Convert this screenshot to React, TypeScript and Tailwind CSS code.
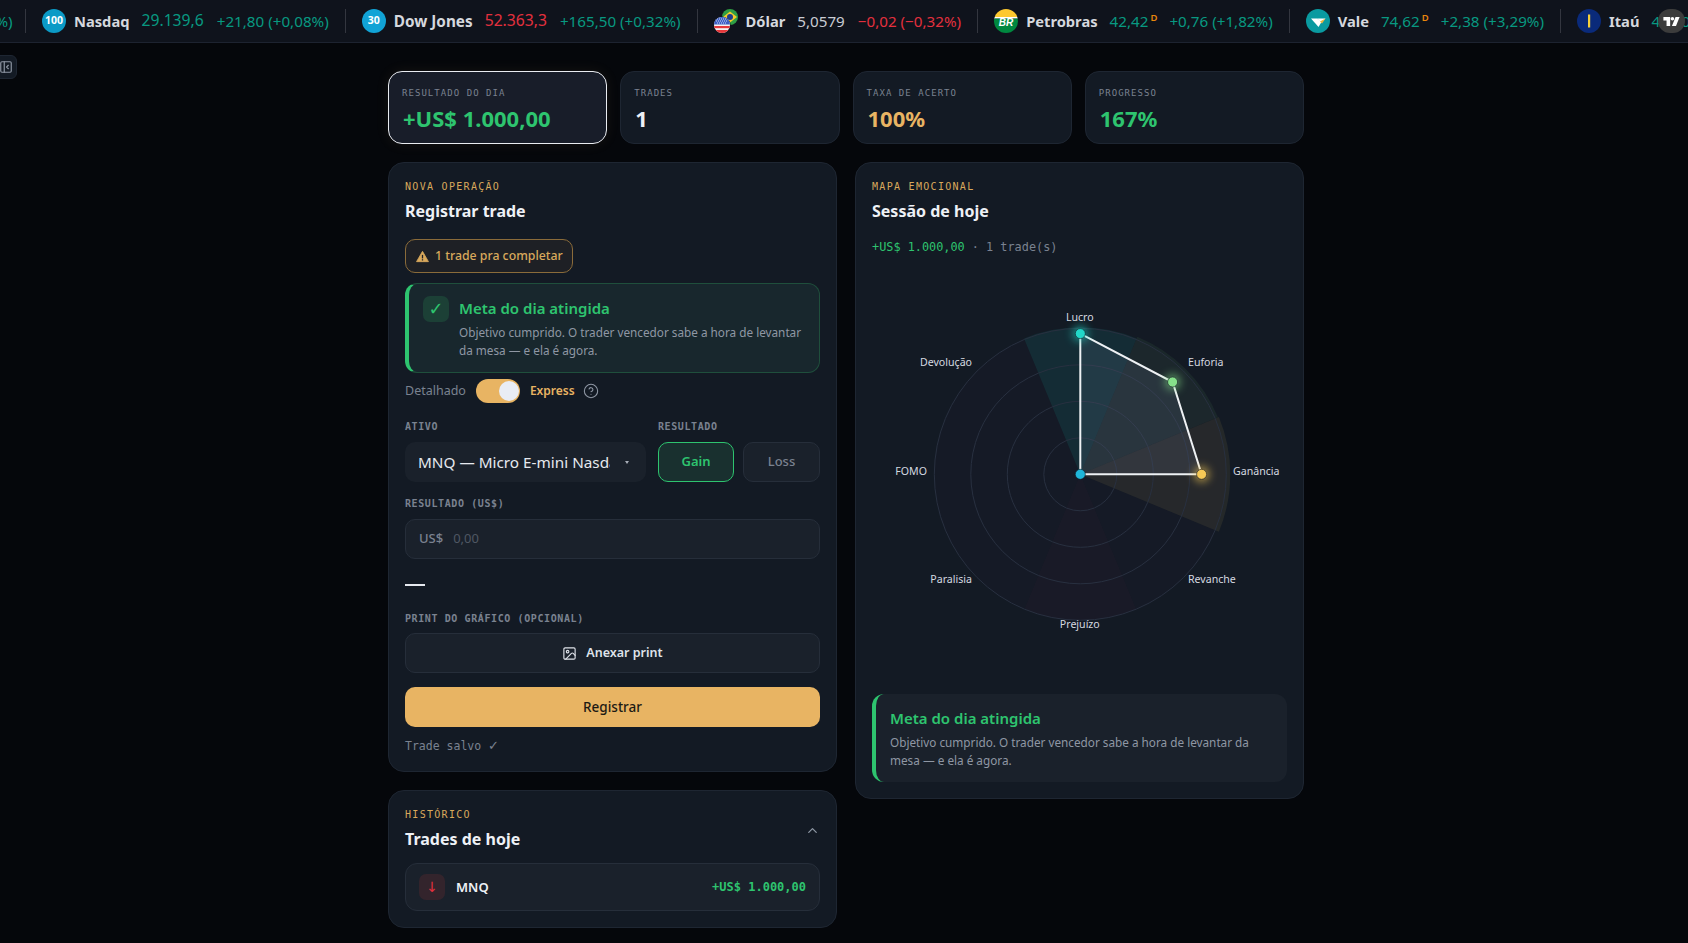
import React from "react";
import { CircleHelp, Image as ImageIcon, ChevronUp, PanelLeftClose } from "lucide-react";

const SANS = "font-['Noto_Sans','Open_Sans',sans-serif]";
const MONO = "font-['DejaVu_Sans_Mono','Liberation_Mono',monospace]";

function Badge({ children, bg }: { children: React.ReactNode; bg: string }) {
  return (
    <span className="flex h-6 w-6 shrink-0 items-center justify-center rounded-full text-[10.5px] font-bold text-white" style={{ background: bg }}>
      {children}
    </span>
  );
}

function Flags() {
  return (
    <svg width="24" height="24" viewBox="0 0 24 24" className="shrink-0">
      <circle cx="16" cy="8" r="8" fill="#2f9e44" />
      <path d="M16 2.5 23 8l-7 5.5L9 8z" fill="#f7c92b" />
      <circle cx="16" cy="8" r="3" fill="#1d3f8f" />
      <circle cx="8" cy="16" r="8.6" fill="#10131c" />
      <clipPath id="us"><circle cx="8" cy="16" r="8" /></clipPath>
      <g clipPath="url(#us)">
        <rect x="0" y="8" width="16" height="16" fill="#f4f4f4" />
        <rect x="0" y="17" width="16" height="2.2" fill="#e5383b" />
        <rect x="0" y="21" width="16" height="3" fill="#e5383b" />
        <rect x="0" y="8" width="16" height="7.5" fill="#3c5fc4" />
        <path d="M3 10h10M2 12h12M3 14h10" stroke="#dfe6ff" strokeWidth="0.9" strokeDasharray="1 1" />
      </g>
    </svg>
  );
}

function Petrobras() {
  return (
    <svg width="24" height="24" viewBox="0 0 24 24" className="shrink-0">
      <clipPath id="pb"><circle cx="12" cy="12" r="12" /></clipPath>
      <g clipPath="url(#pb)">
        <rect width="24" height="8" fill="#fdc82f" />
        <rect y="8" width="24" height="1.6" fill="#fff" />
        <rect y="9.6" width="24" height="14.4" fill="#00883f" />
      </g>
      <text x="12" y="17" textAnchor="middle" fontSize="10" fontWeight="700" fontStyle="italic" fill="#fff" fontFamily="Liberation Sans">BR</text>
    </svg>
  );
}

function Vale() {
  return (
    <svg width="24" height="24" viewBox="0 0 24 24" className="shrink-0">
      <circle cx="12" cy="12" r="12" fill="#0a9aa0" />
      <path d="M5 9.5 12.5 18 15.5 13 11 9.5z" fill="#fff" />
      <path d="M11 9.5h8.5l-4 4.5z" fill="#fff" />
      <path d="M14 12.5 19.5 9.5 16 14.5z" fill="#e9b23a" />
    </svg>
  );
}

function Itau() {
  return (
    <svg width="24" height="24" viewBox="0 0 24 24" className="shrink-0">
      <circle cx="12" cy="12" r="12" fill="#0a2a7a" />
      <rect x="11" y="5.5" width="2.2" height="13" fill="#f5cf3a" />
    </svg>
  );
}

function D() {
  return <span className="relative -top-[6px] ml-[2px] inline-block text-[9.5px] font-semibold leading-none text-[#e8860c]">D</span>;
}

const TEAL = "text-[#089981]";
const RED = "text-[#e3303e]";

type ItemProps = {
  logo: React.ReactNode;
  name: string;
  nameCls?: string;
  price: string;
  priceCls: string;
  change?: string;
  changeCls?: string;
  d?: boolean;
};

function Item({ logo, name, nameCls = "text-[14.7px]", price, priceCls, change, changeCls, d }: ItemProps) {
  return (
    <div className="flex shrink-0 items-center">
      <div className="mx-4 h-6 w-[1px] bg-[#33363f]" />
      {logo}
      <span className={`ml-2 font-bold text-[#d5d8de] ${nameCls}`}>{name}</span>
      <span className={`ml-[12px] ${priceCls}`}>{price}{d && <D />}</span>
      {change && <span className={`text-[15.2px] ${d ? "ml-[12px]" : "ml-[13px]"} ${changeCls}`}>{change}</span>}
    </div>
  );
}

function Ticker() {
  return (
    <div className={`relative flex h-[43px] items-center overflow-hidden border-b border-[#1d2330] bg-[#0f131c] ${SANS}`}>
      <div className="-ml-[48px] flex shrink-0 items-center whitespace-nowrap">
        <span className={`w-[57px] text-right text-[15.2px] ${TEAL}`}>(+0,36%)</span>
        <Item logo={<Badge bg="#0b9ac6">100</Badge>} name="Nasdaq" price="29.139,6" priceCls={`text-[15.7px] ${TEAL}`} change="+21,80 (+0,08%)" changeCls={TEAL} />
        <Item logo={<Badge bg="#11a3d6">30</Badge>} name="Dow Jones" nameCls="text-[15.3px]" price="52.363,3" priceCls={`text-[15.7px] ${RED}`} change="+165,50 (+0,32%)" changeCls={TEAL} />
        <Item logo={<Flags />} name="Dólar" price="5,0579" priceCls="text-[15.2px] text-[#c9ccd3]" change="−0,02 (−0,32%)" changeCls={RED} />
        <Item logo={<Petrobras />} name="Petrobras" price="42,42" priceCls={`text-[15.2px] ${TEAL}`} change="+0,76 (+1,82%)" changeCls={TEAL} d />
        <Item logo={<Vale />} name="Vale" price="74,62" priceCls={`text-[15.2px] ${TEAL}`} change="+2,38 (+3,29%)" changeCls={TEAL} d />
        <Item logo={<Itau />} name="Itaú" price="42,10" priceCls={`text-[15.2px] ${TEAL}`} />
      </div>
      <div className="absolute right-[3px] top-[9px] flex h-6 w-[27px] items-center justify-center rounded-full bg-[#3c3c3c]">
        <svg width="17" height="9" viewBox="0 0 36 20" fill="#fff">
          <path d="M0 0h15v20H7V8H0z" />
          <circle cx="20" cy="4" r="4" />
          <path d="M27 0h9l-8 20h-9z" />
        </svg>
      </div>
    </div>
  );
}

function Kpi({ label, value, cls, active }: { label: string; value: string; cls: string; active?: boolean }) {
  return (
    <div className={`h-[73px] rounded-[14px] border px-[13px] pt-[14px] ${active ? "border-[#e9ecf1] bg-[#181d29] shadow-[0_0_14px_rgba(232,180,99,0.08)]" : "border-[#1e2632] bg-[#131a24]"}`}>
      <div className={`text-[9px] leading-[14px] tracking-[1.05px] text-[#7a8290] ${MONO}`}>{label}</div>
      <div className={`mt-[3px] ml-[1px] text-[22px] font-bold leading-[30px] ${cls}`}>{value}</div>
    </div>
  );
}

function Eyebrow({ children }: { children: React.ReactNode }) {
  return <div className={`text-[10px] leading-[14px] tracking-[1.3px] text-[#d9a95c] ${MONO}`}>{children}</div>;
}

function Title({ children }: { children: React.ReactNode }) {
  return <div className="mt-[4px] text-[16px] font-bold leading-[26px] text-[#eef1f6]">{children}</div>;
}

function Label({ children }: { children: React.ReactNode }) {
  return <div className={`text-[10px] font-semibold leading-[14px] tracking-[0.6px] text-[#7a8290] ${MONO}`}>{children}</div>;
}

function WarnIcon() {
  return (
    <svg width="13" height="13" viewBox="0 0 24 24" className="shrink-0">
      <path d="M12 2.5 23 21.5H1z" fill="#d9a95c" stroke="#d9a95c" strokeWidth="1.5" strokeLinejoin="round" />
      <rect x="10.8" y="9" width="2.4" height="6.5" fill="#1e2025" />
      <rect x="10.8" y="17" width="2.4" height="2.4" fill="#1e2025" />
    </svg>
  );
}

function FormCard() {
  return (
    <section className="rounded-[16px] border border-[#1e2632] bg-[#131a24] px-[16px] pb-[17px] pt-[17px]">
      <Eyebrow>NOVA OPERAÇÃO</Eyebrow>
      <Title>Registrar trade</Title>
      <div className="mt-[15px] flex h-[34px] w-[168px] items-center gap-[6px] rounded-[10px] border border-[#8a6b3a] bg-[#1e2025] pl-[10px] text-[12.3px] font-medium text-[#d9a95c]">
        <WarnIcon />
        <span className="mt-[1px]">1 trade pra completar</span>
      </div>
      <div className="mt-[10px] flex h-[90px] gap-[10px] rounded-[12px] border border-l-4 border-[#1f4f3c] border-l-[#2ec46f] bg-[#18272d] pl-[14px] pt-[13px]">
        <div className="-mt-[1px] flex h-[26px] w-[26px] shrink-0 items-center justify-center rounded-[7px] bg-[#1c4036] text-[18px] leading-none text-[#2ec46f] font-['DejaVu_Sans',sans-serif]">
          ✓
        </div>
        <div>
          <div className="text-[15px] font-semibold leading-[22px] text-[#2ec46f]">Meta do dia atingida</div>
          <div className="mt-[4px] w-[350px] text-[11.75px] leading-[18px] text-[#8f97a4]">Objetivo cumprido. O trader vencedor sabe a hora de levantar da mesa — e ela é agora.</div>
        </div>
      </div>
      <div className="mt-[6px] flex h-[24px] items-center text-[12.5px]">
        <span className="text-[#7a8290]">Detalhado</span>
        <span className="ml-[10px] flex h-[24px] w-[44px] items-center justify-end rounded-full bg-[#e8b463] pr-[1px]">
          <span className="h-[20px] w-[20px] rounded-full bg-[#e9edf5]" />
        </span>
        <span className="ml-[10px] text-[12px] font-semibold text-[#e8b463]">Express</span>
        <CircleHelp size={16} className="ml-[8px] text-[#8f97a4]" strokeWidth={1.6} />
      </div>
      <div className="mt-[17px] flex gap-[12px]">
        <div className="w-[241px]">
          <Label>ATIVO</Label>
          <div className="mt-[8px] flex h-[40px] items-center rounded-[10px] bg-[#1a212b] pl-[13px]">
            <span className="w-[192px] overflow-hidden whitespace-nowrap text-[15.3px] text-[#e6e9ef]">MNQ — Micro E-mini Nasdaq 100</span>
            <span className="ml-[15px] h-0 w-0 border-x-[2.5px] border-t-[3px] border-x-transparent border-t-[#a8aeb8]" />
          </div>
        </div>
        <div className="flex-1">
          <Label>RESULTADO</Label>
          <div className="mt-[8px] flex gap-[9px]">
            <div className="flex h-[40px] w-[76px] items-center justify-center rounded-[10px] border border-[#2ec46f] bg-[#19302f] text-[13px] font-semibold text-[#2ec46f]">Gain</div>
            <div className="flex h-[40px] flex-1 items-center justify-center rounded-[10px] border border-[#262e3a] bg-[#1a212b] text-[13px] font-medium text-[#7a8290]">Loss</div>
          </div>
        </div>
      </div>
      <div className="mt-[15px]"><Label>RESULTADO (US$)</Label></div>
      <div className="mt-[8px] flex h-[40px] items-center rounded-[10px] border border-[#262e3a] bg-[#1a212b] pl-[13px] text-[13px]">
        <span className="font-medium text-[#7a8290]">US$</span>
        <span className="ml-[10px] text-[#4f5763]">0,00</span>
      </div>
      <div className="mt-[25px] h-[2px] w-[20px] bg-[#e6e9ef]" />
      <div className="mt-[26px]"><Label>PRINT DO GRÁFICO (OPCIONAL)</Label></div>
      <div className="mt-[7px] flex h-[40px] items-center justify-center gap-[9px] rounded-[10px] border border-[#262e3a] bg-[#1a212b] text-[12.5px] font-semibold text-[#dfe3ea]">
        <ImageIcon size={15} strokeWidth={1.8} />
        <span className="mt-[1px]">Anexar print</span>
      </div>
      <div className="mt-[14px] flex h-[40px] items-center justify-center rounded-[10px] bg-[#e8b463] text-[13.5px] font-medium text-[#1d1a14]">Registrar</div>
      <div className={`mt-[11px] text-[11.5px] leading-[16px] text-[#7a8290] ${MONO}`}>
        Trade salvo <span className="text-[13px] font-['DejaVu_Sans',sans-serif]">✓</span>
      </div>
    </section>
  );
}

function HistoryCard() {
  return (
    <section className="mt-[18px] rounded-[16px] border border-[#1e2632] bg-[#131a24] px-[16px] pb-[16px] pt-[17px]">
      <div className="flex items-center justify-between">
        <div>
          <Eyebrow>HISTÓRICO</Eyebrow>
          <Title>Trades de hoje</Title>
        </div>
        <ChevronUp size={15} className="text-[#8f97a4]" />
      </div>
      <div className="mt-[11px] flex h-[48px] items-center rounded-[12px] border border-[#262e3a] bg-[#1a212b] pl-[13px] pr-[13px]">
        <div className="flex h-[26px] w-[26px] items-center justify-center rounded-[7px] bg-[#33242c] text-[14px] text-[#e3303e] font-['DejaVu_Sans',sans-serif]">↓</div>
        <span className="ml-[11px] mt-[2px] text-[13px] font-semibold text-[#eef1f6]">MNQ</span>
        <span className={`ml-auto text-[12px] font-semibold text-[#2ec46f] ${MONO}`}>+US$ 1.000,00</span>
      </div>
    </section>
  );
}

const CX = 208.3;
const CY = 208.3;

function wedge(a0: number, a1: number, r: number) {
  const rad = (a: number) => ((a - 90) * Math.PI) / 180;
  const x0 = CX + r * Math.cos(rad(a0));
  const y0 = CY + r * Math.sin(rad(a0));
  const x1 = CX + r * Math.cos(rad(a1));
  const y1 = CY + r * Math.sin(rad(a1));
  return `M${CX} ${CY}L${x0} ${y0}A${r} ${r} 0 0 1 ${x1} ${y1}Z`;
}

function Radar() {
  const lucro: [number, number] = [CX, CY - 140.7];
  const euforia: [number, number] = [CX + 92.3, CY - 92.3];
  const ganancia: [number, number] = [CX + 121.3, CY];
  const labels: [string, number, number, "start" | "middle" | "end"][] = [
    ["Lucro", CX - 0.5, 52, "middle"],
    ["Euforia", 316, 97, "start"],
    ["Ganância", 361, 206, "start"],
    ["Revanche", 316, 314, "start"],
    ["Prejuízo", CX - 0.5, 359, "middle"],
    ["Paralisia", 100, 314, "end"],
    ["FOMO", 55, 206, "end"],
    ["Devolução", 100, 97, "end"],
  ];
  const poly = `${CX},${CY} ${lucro.join(",")} ${euforia.join(",")} ${ganancia.join(",")}`;
  return (
    <svg viewBox="0 0 415 416" className="mt-[10px] h-[416px] w-full">
      <defs>
        <filter id="glow" x="-100%" y="-100%" width="300%" height="300%">
          <feGaussianBlur stdDeviation="4.5" />
        </filter>
      </defs>
      <circle cx={CX} cy={CY} r="146" fill="#2a1f3a" opacity="0.1" />
      <path d={wedge(-22.5, 22.5, 147)} fill="#14b8a6" opacity="0.12" />
      <path d={wedge(22.5, 67.5, 149)} fill="#7ddb86" opacity="0.07" />
      <path d={wedge(67.5, 112.5, 150)} fill="#f5d565" opacity="0.08" />
      <path d={wedge(157.5, 202.5, 146)} fill="#f43f5e" opacity="0.02" />
      {[36.5, 73, 109.5, 146].map((r) => (
        <circle key={r} cx={CX} cy={CY} r={r} fill="none" stroke="#283040" strokeWidth="1" />
      ))}
      <polygon points={poly} fill="#b4c8f0" opacity="0.09" />
      <polygon points={poly} fill="none" stroke="#eef1f4" strokeWidth="2" />
      <circle cx={lucro[0]} cy={lucro[1]} r="8" fill="#22d8c8" opacity="0.55" filter="url(#glow)" />
      <circle cx={euforia[0]} cy={euforia[1]} r="8" fill="#86e08a" opacity="0.55" filter="url(#glow)" />
      <circle cx={ganancia[0]} cy={ganancia[1]} r="8" fill="#f5c855" opacity="0.6" filter="url(#glow)" />
      <circle cx={lucro[0]} cy={lucro[1]} r="5" fill="#22d8c8" stroke="#131a24" strokeWidth="0.6" />
      <circle cx={euforia[0]} cy={euforia[1]} r="5" fill="#86e08a" stroke="#131a24" strokeWidth="0.6" />
      <circle cx={ganancia[0]} cy={ganancia[1]} r="5" fill="#f5c855" stroke="#131a24" strokeWidth="0.6" />
      <circle cx={CX} cy={CY} r="5" fill="#1fb6d9" stroke="#131a24" strokeWidth="0.6" />
      {labels.map(([t, x, y, a]) => (
        <text key={t} x={x} y={y} textAnchor={a} dominantBaseline="middle" fontSize="10.6" fill="#d5d9e0">{t}</text>
      ))}
    </svg>
  );
}

function MapCard() {
  return (
    <section className="rounded-[16px] border border-[#1e2632] bg-[#131a24] px-[16px] pb-[16px] pt-[17px]">
      <Eyebrow>MAPA EMOCIONAL</Eyebrow>
      <Title>Sessão de hoje</Title>
      <div className={`mt-[14px] text-[11.85px] leading-[18px] text-[#7a8290] ${MONO}`}>
        <span className="text-[#2ec46f]">+US$ 1.000,00</span> · 1 trade(s)
      </div>
      <Radar />
      <div className="mt-[12px] h-[88px] rounded-[12px] border-l-4 border-[#2ec46f] bg-[#1a212b] pl-[14px] pt-[13px]">
        <div className="text-[15px] font-semibold leading-[22px] text-[#2ec46f]">Meta do dia atingida</div>
        <div className="mt-[4px] w-[370px] text-[11.75px] leading-[18px] text-[#8f97a4]">Objetivo cumprido. O trader vencedor sabe a hora de levantar da mesa — e ela é agora.</div>
      </div>
    </section>
  );
}

export default function App() {
  return (
    <div className={`relative min-h-[943px] overflow-hidden bg-[#05070b] ${SANS}`}>
      <Ticker />
      <div className="absolute -left-[10px] top-[55px] flex h-[24px] w-[27px] items-center justify-end rounded-r-[6px] border border-[#1e2632] bg-[#131a24] pr-[3px] text-[#8f97a4]">
        <PanelLeftClose size={14} />
      </div>
      <main className="ml-[388px] w-[916px] pb-[15px] pt-[28px]">
        <div className="grid grid-cols-4 gap-[13px]">
          <Kpi label="RESULTADO DO DIA" value="+US$ 1.000,00" cls="text-[#2ec46f]" active />
          <Kpi label="TRADES" value="1" cls="text-[#eef1f6]" />
          <Kpi label="TAXA DE ACERTO" value="100%" cls="text-[#e8b463]" />
          <Kpi label="PROGRESSO" value="167%" cls="text-[#2ec46f]" />
        </div>
        <div className="mt-[18px] grid grid-cols-2 items-start gap-[18px]">
          <div>
            <FormCard />
            <HistoryCard />
          </div>
          <MapCard />
        </div>
      </main>
    </div>
  );
}
